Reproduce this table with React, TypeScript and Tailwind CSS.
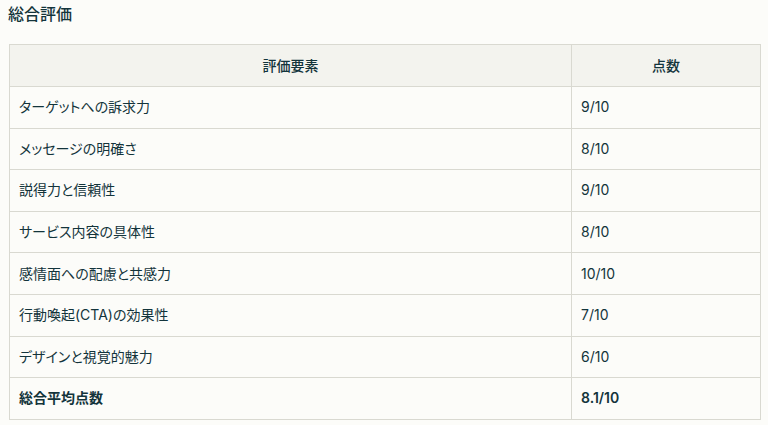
import React from 'react';

const rows: { label: string; score: string }[] = [
    { label: 'ターゲットへの訴求力', score: '9/10' },
    { label: 'メッセージの明確さ', score: '8/10' },
    { label: '説得力と信頼性', score: '9/10' },
    { label: 'サービス内容の具体性', score: '8/10' },
    { label: '感情面への配慮と共感力', score: '10/10' },
    { label: '行動喚起(CTA)の効果性', score: '7/10' },
    { label: 'デザインと視覚的魅力', score: '6/10' },
];

const App: React.FC = () => {
    return (
        <div className="min-h-screen bg-[#fcfcf9] text-[#13343b] font-['Inter','Noto_Sans_CJK_JP',sans-serif] [font-feature-settings:'palt'] px-[9px] pt-[4px]">
            <h2 className="text-[16px] font-medium leading-[20px] -ml-px">総合評価</h2>

            <table className="mt-[20px] w-[752px] border-collapse text-[14px] leading-[20px]">
                <thead>
                    <tr className="bg-[#f3f3ee]">
                        <th className="w-[562px] h-[42px] border border-[#d9d9d1] font-medium text-center">評価要素</th>
                        <th className="h-[42px] border border-[#d9d9d1] font-medium text-center">点数</th>
                    </tr>
                </thead>
                <tbody>
                    {rows.map((r) => (
                        <tr key={r.label}>
                            <td className="h-[41.6px] border border-[#d9d9d1] px-[9px]">{r.label}</td>
                            <td className="h-[41.6px] border border-[#d9d9d1] px-[9px]">{r.score}</td>
                        </tr>
                    ))}
                    <tr>
                        <td className="h-[41.6px] border border-[#d9d9d1] px-[9px] font-bold">総合平均点数</td>
                        <td className="h-[41.6px] border border-[#d9d9d1] px-[9px] font-semibold">8.1/10</td>
                    </tr>
                </tbody>
            </table>
        </div>
    );
};

export default App;
